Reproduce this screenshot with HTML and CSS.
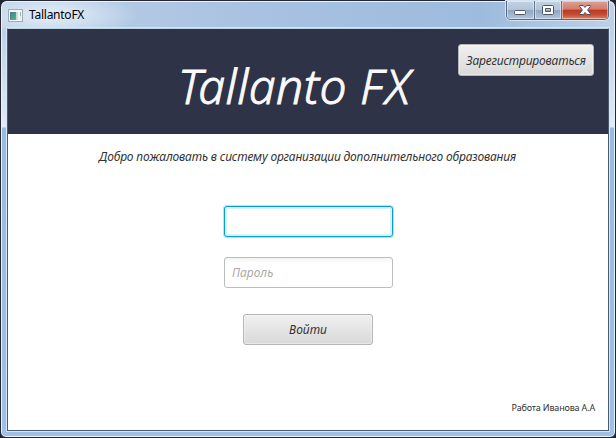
FILE: index.html
```html
<!DOCTYPE html>
<html lang="ru">
<head>
<meta charset="utf-8">
<title>TallantoFX</title>
<link rel="stylesheet" href="styles.css">
</head>
<body>
<div class="window">
  <div class="titlebar">
    <svg class="app-icon" width="16" height="14" viewBox="0 0 16 14">
      <defs><linearGradient id="pane" x1="0" y1="0" x2="1" y2="1"><stop offset="0" stop-color="#3d7ca5"/><stop offset="1" stop-color="#55b578"/></linearGradient></defs>
      <rect x=".5" y=".5" width="14" height="12" fill="#f4f5f6" stroke="#a4a9ae"/>
      <rect x="2" y="3" width="6" height="8" fill="url(#pane)"/>
      <rect x="8" y="3" width="2" height="8" fill="#c5d8dc"/>
      <rect x="12" y="3" width="1" height="4" fill="#8bbcab"/>
      <rect x="12" y="7" width="1" height="4" fill="#dce1e5"/>
    </svg>
    <span class="caption">TallantoFX</span>
    <div class="controls">
      <span class="control minimize"><svg width="13" height="6" viewBox="0 0 13 6"><rect x=".5" y=".5" width="11" height="4" rx="1" fill="#fff" stroke="#50566a"/></svg></span>
      <span class="control maximize"><svg width="12" height="10" viewBox="0 0 12 10"><path fill="#fff" stroke="#50566a" fill-rule="evenodd" d="M1.500.5h9q1 0 1 1v7q0 1-1 1h-9q-1 0-1-1v-7q0-1 1-1zM3.500 3.500v3h5v-3z"/></svg></span>
      <span class="control close"><svg width="12" height="10" viewBox="0 0 12 10"><path fill="#fff" stroke="#57505c" stroke-linejoin="round" d="M.7.5h3.600L6 2.500 7.700.5h3.600v1L8.600 5l2.700 3.500v1H7.700L6 7.500 4.300 9.500H.7v-1L3.400 5 .7 1.500z"/></svg></span>
    </div>
  </div>
  <div class="client">
    <header class="header">
      <h1 class="brand">Tallanto <span class="suffix">FX</span></h1>
      <button class="button register">Зарегистрироваться</button>
    </header>
    <main class="login">
      <p class="welcome">Добро пожаловать в систему организации дополнительного образования</p>
      <input class="field focused" type="text">
      <input class="field password" type="password" placeholder="Пароль">
      <button class="button enter">Войти</button>
    </main>
    <footer class="credit">Работа Иванова А.А</footer>
  </div>
</div>
</body>
</html>
```
FILE: styles.css
```css
* { box-sizing: border-box; }
body {
  margin: 0;
  background: #24242f;
  font-family: "Noto Sans", "Open Sans", sans-serif;
  font-size: 12px;
  color: #333;
  overflow: hidden;
}
.window {
  width: 616px;
  height: 438px;
  padding: 0 6px 6px;
  border: 1px solid #252833;
  border-radius: 7px 7px 6px 6px;
  box-shadow: inset 0 0 0 1px #e9f3fb;
  background: linear-gradient(to bottom, #b4cbe6 0, #bdd1e8 28px, #e3ebf5 126px, #99bbde 127px, #9fc1e5 100%);
}
.titlebar {
  display: flex;
  height: 27px;
  margin: 0 -5px;
  padding: 7px 6px 0;
  align-items: flex-start;
  border-radius: 6px 6px 0 0;
  box-shadow: inset 0 1px #e9f3fb;
  background: radial-gradient(ellipse 85px 24px at 50px 14px, #dce8f5 20%, transparent 100%), linear-gradient(90deg, #bdd0e8, #a9c3e1 38%, #9dbbdd 78%, #bed1e7);
}
.app-icon { margin-top: 1px; }
.caption {
  margin: -2px 0 0 5px;
  font: 12px/17px "Noto Sans", sans-serif;
  letter-spacing: -0.25px;
  color: #000;
}
.controls {
  display: flex;
  width: 103px;
  height: 19px;
  margin: -7px -1px 0 auto;
  border: 1px solid #59667c;
  border-top: 0;
  border-radius: 0 0 5px 5px;
  overflow: hidden;
  box-shadow: 0 0 0 1px #d5e3f2;
}
.control {
  display: flex;
  align-items: center;
  justify-content: center;
  width: 28px;
  box-shadow: inset 0 0 0 1px rgba(255,255,255,.45);
  background: linear-gradient(#c4d2e4, #b2c4da 48%, #8fa6c1 50%, #afc6df);
  border-right: 1px solid #65748b;
}
.minimize { padding-top: 5px; }
.maximize { width: 27px; }
.close {
  flex: 1;
  border: 0;
  background: linear-gradient(#e0a092, #d27b6b 46%, #b63b25 50%, #c64b31 75%, #d98468);
}
.client {
  display: flex;
  flex-direction: column;
  height: 403px;
  border: 1px solid #4d5b70;
  border-top-color: #b8d3df;
  background: #fff;
  outline: 1px solid #d5e5f5;
}
.header {
  display: flex;
  flex: none;
  justify-content: flex-end;
  height: 105px;
  background: #2f3347;
}
.brand {
  width: 234px;
  margin: 23px 46px 0 0;
  font: italic 300 48px/68px "Noto Sans", sans-serif;
  letter-spacing: 0.45px;
  -webkit-text-stroke: 0.9px #fafafa;
  white-space: nowrap;
  color: #fafafa;
}
.suffix { letter-spacing: 2.5px; }
.button {
  display: flex;
  align-items: center;
  justify-content: center;
  padding: 0;
  border: 1px solid #b5b5b5;
  border-radius: 3px;
  background: linear-gradient(#f0f0f0, #d9d9d9);
  box-shadow: inset 0 0 0 1px rgba(255,255,255,.4);
  font: italic 12px/17px "Noto Sans", sans-serif;
  color: #333;
}
.register {
  width: 136px;
  height: 32px;
  margin: 15px 14px 0 0;
  letter-spacing: -0.18px;
  white-space: nowrap;
}
.login {
  display: flex;
  flex: 1;
  flex-direction: column;
  align-items: center;
  padding-left: 1px;
}
.welcome {
  margin: 14px 2px 41px 0;
  font-style: italic;
  line-height: 17px;
  letter-spacing: -0.18px;
  white-space: nowrap;
}
.field {
  width: 169px;
  height: 31px;
  margin-bottom: 20px;
  padding: 0 7px;
  border: 1px solid #bcbcbc;
  border-radius: 3px;
  background: linear-gradient(#f3f3f3, #fff 5px);
  font: italic 12px/17px "Noto Sans", sans-serif;
  outline: none;
}
.field::placeholder { color: #aaa; opacity: 1; }
.focused {
  border-color: #039ed3;
  background: #fff;
  box-shadow: 0 0 0 1px #b5e5f5, inset 0 0 0 2px #d9f1f8;
}
.enter { width: 130px; height: 31px; margin: 6px 1px 0 0; }
.credit {
  height: 29px;
  padding-right: 13px;
  font-size: 9px;
  line-height: 13px;
  letter-spacing: -0.17px;
  text-align: right;
}
```
